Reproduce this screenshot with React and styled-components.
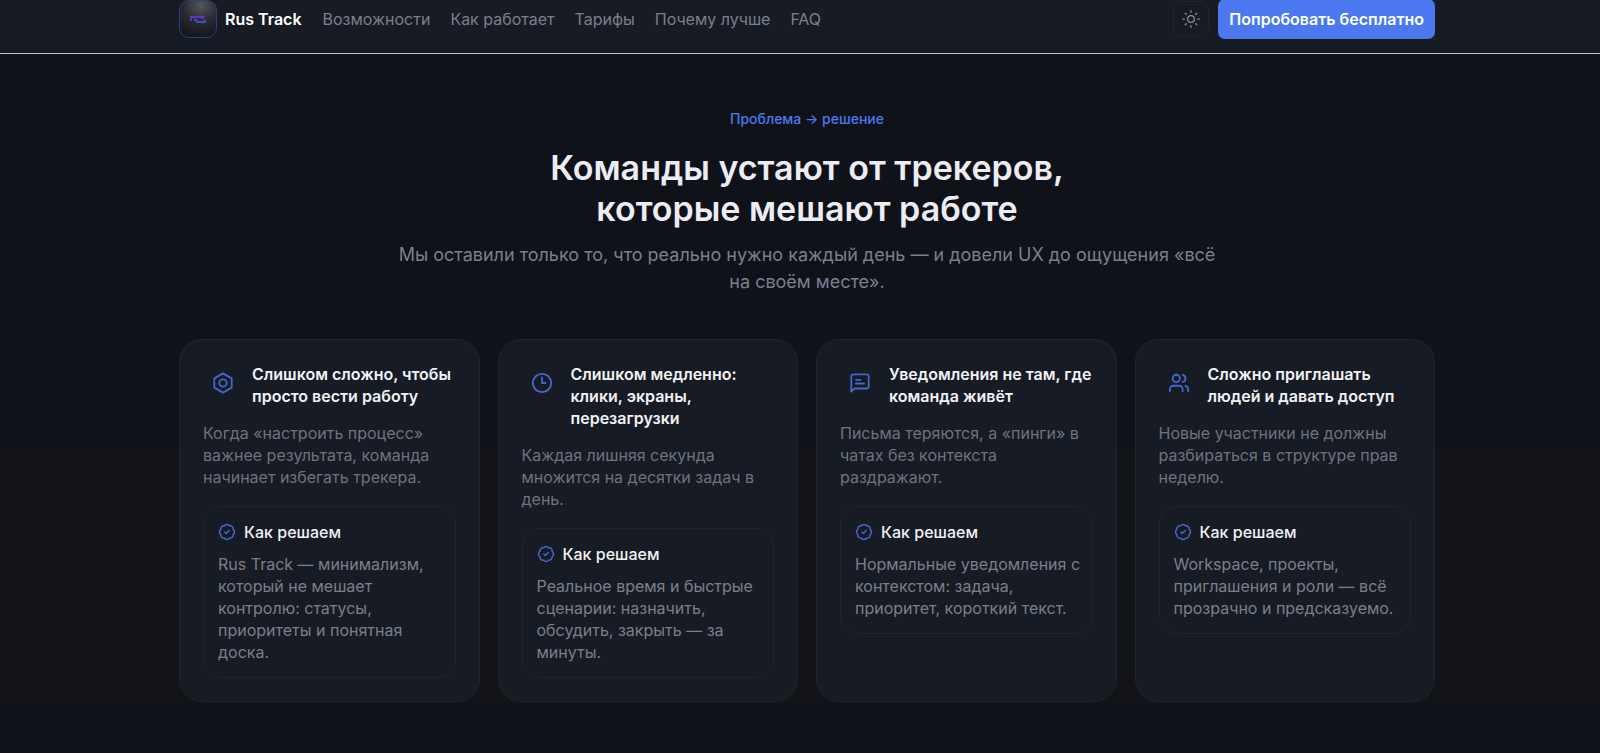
import React from "react";
import styled, { createGlobalStyle } from "styled-components";
import { BadgeCheck, Clock3, Sun, Users } from "lucide-react";

const GlobalStyle = createGlobalStyle`
  * {
    box-sizing: border-box;
  }

  body {
    margin: 0;
    background: #0f1219;
    color: #f1f2f6;
    font-family: Inter, "Liberation Sans", sans-serif;
    font-size: 16px;
    line-height: 22px;
  }

  h2,
  h3,
  h4,
  p {
    margin: 0;
  }
`;

const Container = styled.div`
  width: 100%;
  max-width: 1288px;
  margin: 0 auto;
  padding: 0 16px;
`;

const Header = styled.header`
  padding: 0 0 15px 14px;
  background: #171b23;
  border-bottom: 1px solid #c3c5d2;
`;

const HeaderRow = styled(Container)`
  display: flex;
  align-items: center;
  height: 38px;
`;

const Brand = styled.a`
  display: flex;
  align-items: center;
  gap: 8px;
  color: #ffffff;
  font-weight: 600;
  text-decoration: none;
`;

const BrandMark = styled.span`
  display: grid;
  place-items: center;
  width: 38px;
  height: 38px;
  border: 1px solid #294274;
  border-radius: 10px;
  background: radial-gradient(circle at 58% 12%, #55565c 0%, #2a2b31 45%, #14171e 85%);
`;

const Nav = styled.nav`
  display: flex;
  gap: 20px;
  margin-left: 21px;
`;

const NavLink = styled.a`
  color: #7b7f8c;
  text-decoration: none;
`;

const Actions = styled.div`
  display: flex;
  align-items: center;
  gap: 9px;
  margin-left: auto;
`;

const ThemeButton = styled.button`
  display: grid;
  place-items: center;
  width: 36px;
  height: 36px;
  padding: 0;
  border: 1px solid #20242c;
  border-radius: 9px;
  background: transparent;
  color: #8b8f9b;
`;

const TryButton = styled.button`
  height: 40px;
  padding: 0 11px;
  border: 0;
  border-radius: 7px;
  background: #4b78ee;
  color: #ffffff;
  font: inherit;
  font-weight: 600;
`;

const Section = styled.section`
  padding: 54px 0 48px 14px;
  background: linear-gradient(#0f1219 394px, #121317 394px, #121317 649px, #0f1219 649px);
`;

const Intro = styled.div`
  display: flex;
  flex-direction: column;
  align-items: center;
  text-align: center;
`;

const Eyebrow = styled.p`
  color: #4b78ee;
  font-size: 14px;
  font-weight: 500;
`;

const Heading = styled.h2`
  margin-top: 17px;
  max-width: 560px;
  color: #ececf3;
  font-size: 34px;
  font-weight: 600;
  line-height: 41px;
`;

const Lead = styled.p`
  margin-top: 12px;
  max-width: 832px;
  color: #7b7f8c;
  font-size: 18px;
  line-height: 27px;
`;

const Cards = styled.div`
  display: grid;
  grid-template-columns: repeat(4, 1fr);
  gap: 18px;
  margin-top: 44px;
`;

const Card = styled.article`
  padding: 23px;
  border: 1px solid #20242c;
  border-radius: 23px;
  background: #171b23;
`;

const CardHead = styled.div`
  display: flex;
  gap: 9px;
`;

const CardIcon = styled.span`
  display: grid;
  flex: none;
  place-items: center;
  width: 40px;
  height: 40px;
  color: #4467cc;
`;

const CardTitle = styled.h3`
  font-size: 16px;
  font-weight: 600;
`;

const CardText = styled.p`
  margin-top: 15px;
  color: #6e7280;
`;

const Solution = styled.div`
  margin-top: 18px;
  padding: 14px 8px 14px 14px;
  border: 1px solid #20242c;
  border-radius: 18px;
`;

const SolutionTitle = styled.h4`
  display: flex;
  align-items: center;
  gap: 8px;
  font-size: 16px;
  font-weight: 500;

  svg {
    color: #4467cc;
  }
`;

const SolutionText = styled.p`
  margin-top: 10px;
  color: #7b7f8c;
`;

const LineIcon = ({ size, children }) => (
  <svg
    width={size}
    height={size}
    viewBox="0 0 24 24"
    fill="none"
    stroke="currentColor"
    strokeWidth="2"
    strokeLinecap="round"
    strokeLinejoin="round"
  >
    {children}
  </svg>
);

const HexIcon = ({ size }) => (
  <LineIcon size={size}>
    <path d="M12 1.5 21.5 7v10L12 22.5 2.5 17V7z" />
    <circle cx="12" cy="12" r="4" />
  </LineIcon>
);

const MessageIcon = ({ size }) => (
  <LineIcon size={size}>
    <path d="M2.500 21.500V5a2.500 2.500 0 0 1 2.500-2.500h14A2.500 2.500 0 0 1 21.500 5v10.500a2.500 2.500 0 0 1-2.500 2.500H6z" />
    <path d="M7.500 8.500h5M7.500 12.500h9" />
  </LineIcon>
);

const links = ["Возможности", "Как работает", "Тарифы", "Почему лучше", "FAQ"];

const cards = [
  {
    icon: HexIcon,
    title: "Слишком сложно, чтобы просто вести работу",
    text: "Когда «настроить процесс» важнее результата, команда начинает избегать трекера.",
    solution:
      "Rus Track — минимализм, который не мешает контролю: статусы, приоритеты и понятная доска."
  },
  {
    icon: Clock3,
    title: "Слишком медленно: клики, экраны, перезагрузки",
    text: "Каждая лишняя секунда множится на десятки задач в день.",
    solution:
      "Реальное время и быстрые сценарии: назначить, обсудить, закрыть — за минуты."
  },
  {
    icon: MessageIcon,
    title: "Уведомления не там, где команда живёт",
    text: "Письма теряются, а «пинги» в чатах без контекста раздражают.",
    solution:
      "Нормальные уведомления с контекстом: задача, приоритет, короткий текст."
  },
  {
    icon: Users,
    title: "Сложно приглашать людей и давать доступ",
    text: "Новые участники не должны разбираться в структуре прав неделю.",
    solution:
      "Workspace, проекты, приглашения и роли — всё прозрачно и предсказуемо."
  }
];

const App = () => (
  <>
    <GlobalStyle />
    <Header>
      <HeaderRow>
        <Brand href="#top">
          <BrandMark>
            <svg width="16" height="9" viewBox="0 0 16 9" fill="none">
              <path d="M1 6V2h12v2" stroke="#5a35c4" strokeWidth="2" />
              <path d="M4 5h2l1 2h8V5" stroke="#3f4bd0" strokeWidth="2" />
            </svg>
          </BrandMark>
          Rus Track
        </Brand>
        <Nav>
          {links.map(link => (
            <NavLink href="#section" key={link}>
              {link}
            </NavLink>
          ))}
        </Nav>
        <Actions>
          <ThemeButton aria-label="Сменить тему">
            <Sun size={20} strokeWidth={1.5} />
          </ThemeButton>
          <TryButton>Попробовать бесплатно</TryButton>
        </Actions>
      </HeaderRow>
    </Header>
    <Section>
      <Container>
        <Intro>
          <Eyebrow>Проблема → решение</Eyebrow>
          <Heading>Команды устают от трекеров, которые мешают работе</Heading>
          <Lead>
            Мы оставили только то, что реально нужно каждый день — и довели UX
            до ощущения «всё на своём месте».
          </Lead>
        </Intro>
        <Cards>
          {cards.map(({ icon: Icon, title, text, solution }) => (
            <Card key={title}>
              <CardHead>
                <CardIcon>
                  <Icon size={22} />
                </CardIcon>
                <CardTitle>{title}</CardTitle>
              </CardHead>
              <CardText>{text}</CardText>
              <Solution>
                <SolutionTitle>
                  <BadgeCheck size={18} />
                  Как решаем
                </SolutionTitle>
                <SolutionText>{solution}</SolutionText>
              </Solution>
            </Card>
          ))}
        </Cards>
      </Container>
    </Section>
  </>
);

export default App;
